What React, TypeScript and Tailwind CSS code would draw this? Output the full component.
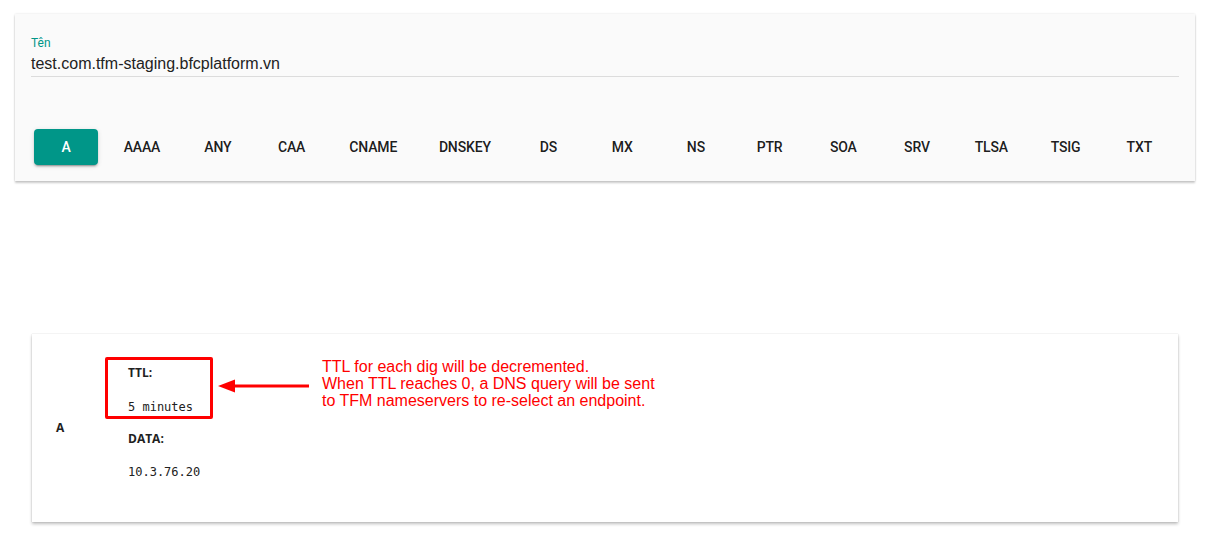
const recordTypes = [
  "A",
  "AAAA",
  "ANY",
  "CAA",
  "CNAME",
  "DNSKEY",
  "DS",
  "MX",
  "NS",
  "PTR",
  "SOA",
  "SRV",
  "TLSA",
  "TSIG",
  "TXT",
];

function TypeButton({ label, active }: { label: string; active: boolean }) {
  return (
    <button
      className={
        active
          ? "h-9 min-w-16 px-4 rounded bg-[#009688] text-white text-sm font-medium uppercase tracking-[-0.15px] shadow-[0_3px_1px_-2px_rgba(0,0,0,0.2),0_2px_2px_0_rgba(0,0,0,0.14),0_1px_5px_0_rgba(0,0,0,0.12)]"
          : "h-9 min-w-16 px-4 rounded text-black/90 text-sm font-medium uppercase tracking-[-0.15px]"
      }
    >
      {label}
    </button>
  );
}

function ResultCard() {
  return (
    <div className="relative mt-[153px] ml-[32px] w-[1146px] bg-white flex items-center shadow-[0_2px_3px_rgba(0,0,0,0.25),0_0_1px_rgba(0,0,0,0.2)] font-['Open_Sans',sans-serif] text-xs text-[#212121]">
      <div className="w-[96px] pl-6 font-bold">A</div>
      <div className="flex flex-col pt-[31px] pb-[42px] leading-4">
        <div className="font-bold">TTL:</div>
        <div className="mt-[18px] font-['DejaVu_Sans_Mono',monospace]">5 minutes</div>
        <div className="mt-4 font-bold">DATA:</div>
        <div className="mt-[17px] font-['DejaVu_Sans_Mono',monospace]">10.3.76.20</div>
      </div>

      {/* annotation overlay */}
      <div className="absolute left-[73px] top-[23px] w-[108px] h-[62px] border-[3px] border-[#f00] rounded-[2px]" />
      <svg
        className="absolute left-[186px] top-[44px]"
        width="92"
        height="16"
        viewBox="0 0 92 16"
      >
        <path d="M14 8H91" stroke="#f00" strokeWidth="3" />
        <path d="M0 8L17 1.5V14.5Z" fill="#f00" />
      </svg>
      <div className="absolute left-[290px] top-[24px] text-[#f00] text-base leading-[17px] font-['Liberation_Sans',Arial,sans-serif]">
        <div>TTL for each dig will be decremented.</div>
        <div>When TTL reaches 0, a DNS query will be sent</div>
        <div>to TFM nameservers to re-select an endpoint.</div>
      </div>
    </div>
  );
}

export default function App() {
  return (
    <div className="min-h-[538px] bg-white pt-[14px] pb-4">
      <div className="ml-[15px] w-[1180px] bg-[#fafafa] px-4 pt-[21px] pb-4 shadow-[0_2px_2px_rgba(0,0,0,0.2),0_0_2px_rgba(0,0,0,0.12)]">
        <div className="text-xs leading-4 text-[#009688] font-['Roboto',sans-serif]">Tên</div>
        <div className="pt-[3px] pb-[3px] border-b border-[#dcdcdc] text-base leading-[19px] text-[#222] font-['Liberation_Sans',Arial,sans-serif]">
          test.com.tfm-staging.bfcplatform.vn
        </div>
        <div className="mt-[52px] ml-[3px] flex gap-[9.7px] font-['Roboto',sans-serif]">
          {recordTypes.map((t, i) => (
            <TypeButton key={t} label={t} active={i === 0} />
          ))}
        </div>
      </div>
      <ResultCard />
    </div>
  );
}
